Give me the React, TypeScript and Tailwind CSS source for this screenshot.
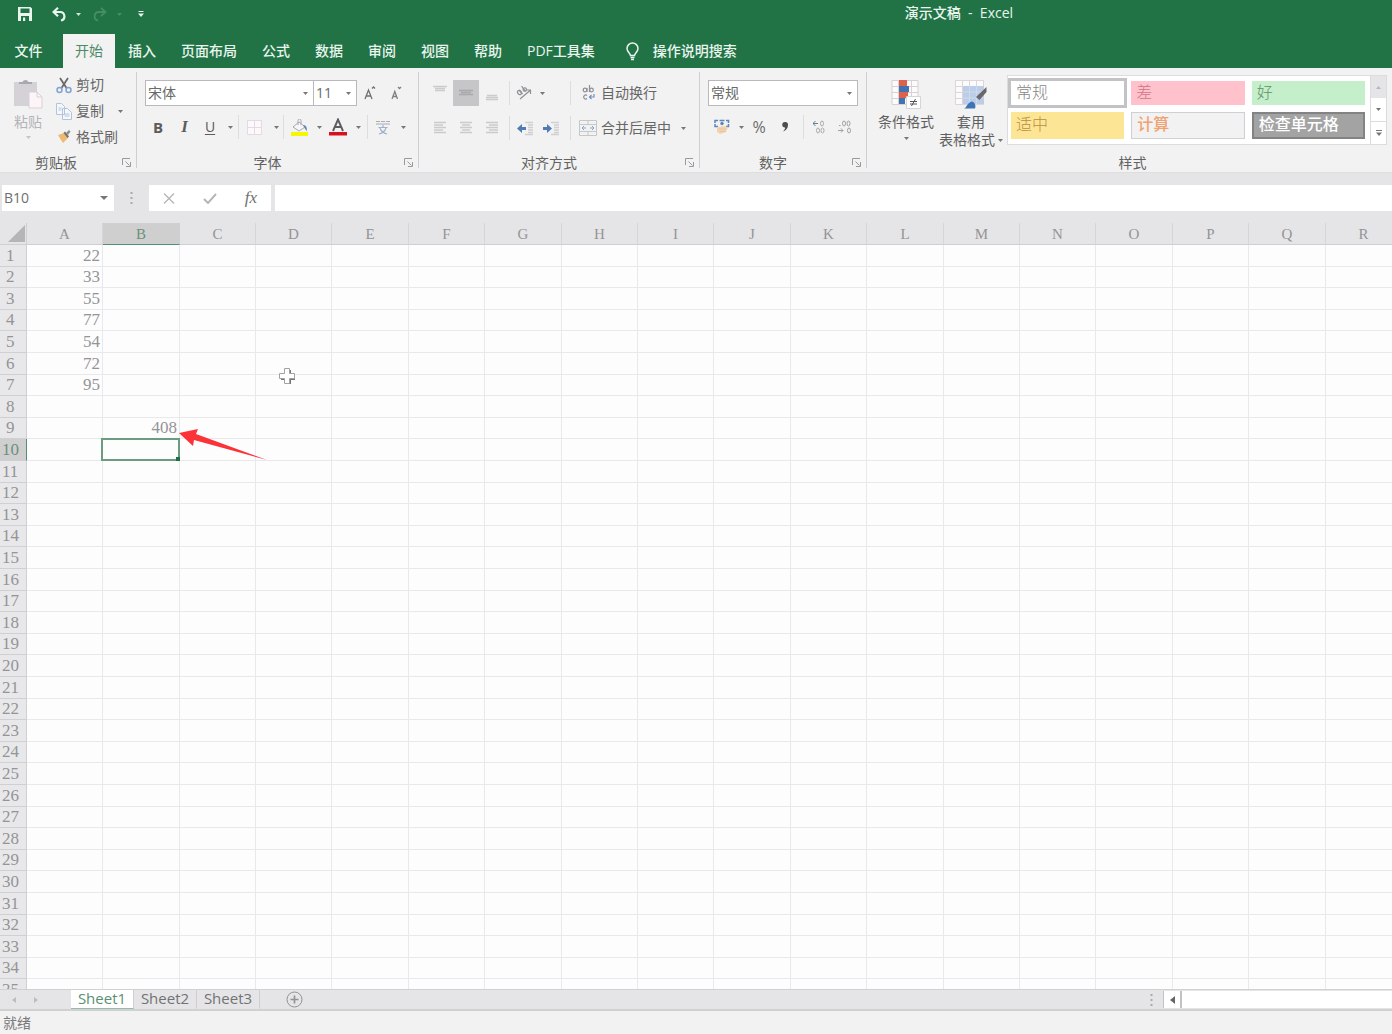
import React, { useState } from 'react';

const UI_FONT = "font-['Open_Sans','Noto_Sans_CJK_SC',sans-serif]";
const CELL_FONT = "font-['Liberation_Serif','Noto_Sans_CJK_SC',serif]";

const tabs = ['文件', '开始', '插入', '页面布局', '公式', '数据', '审阅', '视图', '帮助', 'PDF工具集'];
const sheets = ['Sheet1', 'Sheet2', 'Sheet3'];
const columns = 'ABCDEFGHIJKLMNOPQR'.split('');
const rows = Array.from({ length: 35 }, (_, i) => i + 1);

const cellValues: Record<string, string> = {
  A1: '22',
  A2: '33',
  A3: '55',
  A4: '77',
  A5: '54',
  A6: '72',
  A7: '95',
  B9: '408',
};

// Column and row sizes repeat in groups of five
const columnWidths = ['w-[77px]', 'w-[76px]', 'w-[76px]', 'w-[77px]', 'w-[76px]'];
const rowHeights = ['h-[22px]', 'h-[21px]', 'h-[22px]', 'h-[21px]', 'h-[22px]'];

const cellStyles = [
  { name: '常规', className: 'bg-white font-light text-[#858585] outline-3 outline-[#c3c3c5]' },
  { name: '差', className: 'bg-[#ffc2cd] font-light text-[#cf7685]' },
  { name: '好', className: 'bg-[#c5eecb] font-light text-[#5f9167]' },
  { name: '适中', className: 'bg-[#fde596] font-light text-[#b98f42]' },
  { name: '计算', className: 'bg-[#f2f2f3] font-medium text-[#f0a272] border border-[#cfcfd6]' },
  { name: '检查单元格', className: 'bg-[#a3a3a3] font-medium text-white border-2 border-[#838383]' },
];

interface IconButtonProps {
  label: string;
  className?: string;
  children: React.ReactNode;
}

const IconButton: React.FC<IconButtonProps> = ({ label, className = 'w-[26px]', children }) => (
  <button type="button" aria-label={label} className={`flex h-[26px] shrink-0 items-center justify-center ${className}`}>
    {children}
  </button>
);

const Caret: React.FC<{ className?: string }> = ({ className = 'text-[#777]' }) => (
  <svg width="5" height="3" viewBox="0 0 5 3" className={`shrink-0 ${className}`}>
    <path d="M0 0h5L2.500 3z" fill="currentColor" />
  </svg>
);

const Divider = () => <div className="h-6 w-px shrink-0 bg-[#dddde0]" />;

const Launcher: React.FC<{ label: string }> = ({ label }) => (
  <button type="button" aria-label={label} className="absolute right-1 bottom-0">
    <svg width="10" height="10" viewBox="0 0 10 10" fill="none" stroke="#9a9a9d">
      <path d="M.5 7V.5H8M3.500 3.500l4 4M8.500 4v4.500H4" />
    </svg>
  </button>
);

interface GroupProps {
  title: string;
  className: string;
  launcher?: boolean;
  children: React.ReactNode;
}

const Group: React.FC<GroupProps> = ({ title, className, launcher = true, children }) => (
  <section className={`relative flex h-24 flex-col border-r border-[#cfcfd1] ${className}`}>
    <div className="flex-1">{children}</div>
    <div className="-mb-[3px] text-center text-sm leading-4 text-[#626262]">{title}</div>
    {launcher && <Launcher label={title} />}
  </section>
);

interface DropdownProps {
  label: string;
  options: string[];
  className: string;
}

const Dropdown: React.FC<DropdownProps> = ({ label, options, className }) => (
  <div className={`relative flex h-[26px] shrink-0 items-center border border-[#b9b9bb] bg-white ${className}`}>
    <select aria-label={label} className="h-full w-full appearance-none bg-transparent px-[2px] text-sm leading-5 text-[#6a6a6a] outline-none">
      {options.map((o) => (
        <option key={o}>{o}</option>
      ))}
    </select>
    <Caret className="pointer-events-none absolute right-[5px] text-[#777]" />
  </div>
);

const Lines: React.FC<{ d: string }> = ({ d }) => (
  <svg width="14" height="16" viewBox="0 0 14 16" fill="none" stroke="#cbcbce" strokeWidth="1.600">
    <path d={d} />
  </svg>
);

const TitleBar = () => (
  <header className="relative flex h-[34px] items-start pl-[18px] text-[#e9f5ee]">
    <div className="flex h-7 items-center">
      <button type="button" aria-label="保存">
        <svg width="14" height="14" viewBox="0 0 14 14">
          <path fillRule="evenodd" d="M0 0h12.500L14 1.500V14H0zM2.500 1.500v4.500h9v-4.500zM3 9v5h8V9z" fill="currentColor" />
          <path d="M5 10.500h2.200V14H5z" fill="currentColor" />
        </svg>
      </button>
      <button type="button" aria-label="撤消" className="ml-5">
        <svg width="14" height="15" viewBox="0 0 14 15" fill="none" stroke="currentColor" strokeWidth="2.200">
          <path d="M6 .8L1.500 5 6 9.200M2 5h6a4.300 4.300 0 0 1 1 8.500" />
        </svg>
      </button>
      <Caret className="ml-[10px] text-[#cfe6d8]" />
      <button type="button" aria-label="恢复" className="ml-3">
        <svg width="14" height="15" viewBox="0 0 14 15" fill="none" stroke="#468d65" strokeWidth="1.800">
          <path d="M8 .8L12.500 5 8 9.200M12 5H6a4.300 4.300 0 0 0-1 8.500" />
        </svg>
      </button>
      <Caret className="ml-[10px] text-[#468d65]" />
      <button type="button" aria-label="自定义快速访问工具栏" className="ml-4">
        <svg width="6" height="6" viewBox="0 0 6 6" fill="currentColor">
          <path d="M.5 0h5v1h-5zM0 2.500h6L3 6z" />
        </svg>
      </button>
    </div>
    <div className="absolute top-0 right-0 left-[65%] flex h-[26px] items-center text-sm font-medium whitespace-pre">
      演示文稿  -  Excel
    </div>
  </header>
);

const Menu: React.FC<{ active: string; onChange: (tab: string) => void }> = ({ active, onChange }) => (
  <nav className="flex h-[34px] items-stretch gap-px pl-[2px] text-sm font-medium text-[#e9f5ee]">
    {tabs.map((tab) => (
      <button
        key={tab}
        type="button"
        onClick={() => onChange(tab)}
        className={`shrink-0 whitespace-nowrap ${tab === '文件' ? 'mr-[7px] w-[53px]' : 'px-3'} ${
          tab === active ? 'bg-[#f2f2f2] font-normal text-[#4b8a67]' : ''
        }`}
      >
        {tab}
      </button>
    ))}
    <button type="button" className="ml-[18px] flex items-center gap-[14px] whitespace-nowrap">
      <svg width="13" height="19" viewBox="0 0 13 19" fill="none" stroke="currentColor" strokeWidth="1.500">
        <path d="M4.500 13.500c0-2-3.500-3.500-3.500-7a5.500 5.500 0 0 1 11 0c0 3.500-3.500 5-3.500 7zM4.500 15.500h4M5 17.500h3" />
      </svg>
      操作说明搜索
    </button>
  </nav>
);

const ClipboardGroup = () => (
  <Group title="剪贴板" className="w-[137px] shrink-0 [&>div:nth-child(2)]:pr-6">
    <div className="flex">
      <button type="button" className="flex w-[56px] flex-col items-center pt-[6px] text-sm leading-5 text-[#b4b4b6]">
        <svg width="30" height="31" viewBox="0 0 30 31">
          <path d="M1 4h23v24H1z" fill="#d4d2d7" />
          <path d="M6 6V4h3.500a3.200 3.200 0 0 1 6 0H19v2z" fill="#aaa8ad" />
          <path d="M16 14h8l5 5v11H16z" fill="#fbf5f8" stroke="#dccfd8" />
          <path d="M24 14v5h5" fill="none" stroke="#dccfd8" />
        </svg>
        <span className="mt-[3px]">粘贴</span>
        <Caret className="mt-1 text-[#c5c5c5]" />
      </button>
      <div className="flex flex-col text-sm text-[#666]">
        <button type="button" className="flex h-[26px] items-center gap-1">
          <svg width="16" height="17" viewBox="0 0 16 17" fill="none" strokeWidth="1.500">
            <path d="M4 1l6.500 10M12 1L5.500 11" stroke="#6a6a6c" strokeWidth="1.800" />
            <circle cx="3.500" cy="13" r="2.500" stroke="#7fa3d3" />
            <circle cx="12.500" cy="13" r="2.500" stroke="#7fa3d3" />
          </svg>
          剪切
        </button>
        <button type="button" className="flex h-[26px] items-center gap-1">
          <svg width="16" height="17" viewBox="0 0 16 17" fill="#f4f8fc" stroke="#b4c4d8">
            <path d="M.5.5h5l3 3v8h-8zM6.500 5.500h5l4 4v7h-9z" />
            <path d="M2.500 5h3M2.500 7h3M8.500 11h5M8.500 13h5" />
          </svg>
          复制
          <Caret className="ml-[10px] text-[#777]" />
        </button>
        <button type="button" className="flex h-[26px] items-center gap-1">
          <svg width="16" height="16" viewBox="0 0 16 16">
            <path d="M2 6l6-2 4 5-5 5-2-3z" fill="#eeba72" />
            <path d="M7.500 4L9 2.500l4 5L11.500 9z" fill="#78716c" />
            <path d="M10 4l3-3 1.500 1.500L12 6z" fill="#8d8d8d" />
          </svg>
          格式刷
        </button>
      </div>
    </div>
  </Group>
);

const FontGroup = () => (
  <Group title="字体" className="w-[282px] shrink-0 [&>div:nth-child(2)]:pr-5">
    <div className="flex pt-2 pl-2">
      <Dropdown label="字体" options={['宋体', '黑体', '微软雅黑']} className="w-[169px]" />
      <Dropdown label="字号" options={['11', '12', '14', '16']} className="-ml-px w-11" />
      <IconButton label="增大字号">
        <svg width="12" height="14" viewBox="0 0 12 14" fill="none" stroke="#707072" strokeWidth="1.300">
          <path d="M1 13l3.500-9L8 13M2.300 10h4.500M8 2.500l1.500-1.500L11 2.500" />
        </svg>
      </IconButton>
      <IconButton label="减小字号">
        <svg width="12" height="14" viewBox="0 0 12 14" fill="none" stroke="#808082" strokeWidth="1.300">
          <path d="M2 13l2.800-7.500L7.500 13M3 10.500h3.500M8 1l1.500 1.500L11 1" />
        </svg>
      </IconButton>
    </div>
    <div className="flex items-center pt-2 pl-[7px] text-[#5c5c5c]">
      <IconButton label="加粗" className="w-7">
        <b className="text-[15px] leading-4">B</b>
      </IconButton>
      <IconButton label="倾斜" className="w-[25px]">
        <span className="font-['Liberation_Serif',serif] text-[17px] leading-4 font-bold italic">I</span>
      </IconButton>
      <IconButton label="下划线">
        <span className="text-sm leading-4 underline underline-offset-2">U</span>
      </IconButton>
      <IconButton label="下划线选项" className="w-[15px]">
        <Caret />
      </IconButton>
      <Divider />
      <IconButton label="边框" className="w-[30px]">
        <svg width="15" height="15" viewBox="0 0 15 15" fill="#fcf8fb" stroke="#e2dbe2">
          <path d="M.5.5h14v14H.5zM7.500 0v15M0 7.500h15" />
        </svg>
      </IconButton>
      <IconButton label="边框选项" className="w-[14px]">
        <Caret />
      </IconButton>
      <Divider />
      <IconButton label="填充颜色" className="w-[30px]">
        <svg width="19" height="17" viewBox="0 0 19 17">
          <path d="M3 8l6-5 6 5-6 4z" fill="#f6f6f8" stroke="#a5a9b0" />
          <path d="M8 6V1.500a1.500 1.500 0 0 1 3 0V6" fill="none" stroke="#a5a9b0" />
          <path d="M13 6c3 0 4 2 4 6-2-1-2-3-4-6z" fill="#6485b5" />
          <path d="M1 13h17v4H1z" fill="#f8f500" />
        </svg>
      </IconButton>
      <IconButton label="填充颜色选项" className="w-[10px]">
        <Caret />
      </IconButton>
      <IconButton label="字体颜色" className="w-7">
        <svg width="18" height="18" viewBox="0 0 18 18">
          <path d="M4 13L9 1.500 14 13M6 9h6" fill="none" stroke="#5b5b60" strokeWidth="1.900" />
          <path d="M0 14h18v3.500H0z" fill="#d8121c" />
        </svg>
      </IconButton>
      <IconButton label="字体颜色选项" className="w-3">
        <Caret />
      </IconButton>
      <div className="ml-[3px]">
        <Divider />
      </div>
      <IconButton label="拼音指南" className="w-[30px]">
        <svg width="14" height="15" viewBox="0 0 14 15" fill="none" stroke="#9fb0cf" strokeWidth="1.200">
          <path d="M0 1.500h4M5 1.500h4M10 1.500h4M0 4h14" stroke="#aaaab0" />
          <path d="M7 5v2M2.500 7.500h9M4 8c1 3 3 5 7 6M10 8c-1 3-3 5-7 6" />
        </svg>
      </IconButton>
      <IconButton label="拼音选项" className="w-[10px]">
        <Caret />
      </IconButton>
    </div>
  </Group>
);

const AlignGroup = () => (
  <Group title="对齐方式" className="w-[281px] shrink-0 [&>div:nth-child(2)]:pr-5">
    <div className="flex items-center pt-2 pl-2 text-[#666]">
      <IconButton label="顶端对齐">
        <Lines d="M0 1.500h14M2 3.500h10M2 5.500h10" />
      </IconButton>
      <IconButton label="垂直居中" className="w-[26px] bg-[#c6c5c8] [&_path]:stroke-[#a9a8ac]">
        <Lines d="M0 5.500h14M2 7.500h10M0 9.500h14" />
      </IconButton>
      <IconButton label="底端对齐">
        <Lines d="M2 10.500h10M1 12.500h12M1 14.500h12" />
      </IconButton>
      <div className="ml-1">
        <Divider />
      </div>
      <IconButton label="方向" className="w-[28px]">
        <svg width="16" height="14" viewBox="0 0 16 14" fill="none" stroke="#909094" strokeWidth="1.200">
          <ellipse cx="3.500" cy="6.500" rx="1.800" ry="2.200" transform="rotate(-40 3.500 6.500)" />
          <path d="M3 4l3.500 4M5.500 0l4 5.500" />
          <circle cx="8.800" cy="3.500" r="1.700" />
          <path d="M4 13l10-8.500M10.500 4h4v4" />
        </svg>
      </IconButton>
      <IconButton label="方向选项" className="w-2">
        <Caret />
      </IconButton>
      <div className="ml-6">
        <Divider />
      </div>
      <button type="button" className="ml-[10px] flex h-[26px] items-center gap-1 text-sm whitespace-nowrap">
        <svg width="16" height="16" viewBox="0 0 16 16" fill="none" stroke="#8f9095" strokeWidth="1.200">
          <circle cx="4" cy="5" r="1.800" />
          <path d="M6 3v4M8.500 0v7M6 10.500a2 2 0 1 0 0 3" />
          <circle cx="10.500" cy="5" r="1.800" />
          <path d="M13 9v3H9M10.500 10L8.500 12l2 2" stroke="#6e91c4" />
        </svg>
        自动换行
      </button>
    </div>
    <div className="flex items-center pt-[9px] pl-2 text-[#666]">
      <IconButton label="左对齐">
        <Lines d="M1 2.500h12M1 5h9M1 7.500h12M1 10h9M1 12.500h12" />
      </IconButton>
      <IconButton label="居中">
        <Lines d="M1 2.500h12M3 5h8M1 7.500h12M3 10h8M1 12.500h12" />
      </IconButton>
      <IconButton label="右对齐">
        <Lines d="M1 2.500h12M4 5h9M1 7.500h12M4 10h9M1 12.500h12" />
      </IconButton>
      <div className="ml-1">
        <Divider />
      </div>
      <IconButton label="减少缩进量" className="ml-[2px] w-[26px]">
        <svg width="17" height="15" viewBox="0 0 17 15">
          <path d="M8 1.500h8M11 4h5M11 6.500h5M11 9h5M11 11.500h5M8 13.500h8" stroke="#d0d0d4" strokeWidth="1.500" />
          <path d="M0 7.500L5 3v3h4v3H5v3z" fill="#507bb5" />
        </svg>
      </IconButton>
      <IconButton label="增加缩进量">
        <svg width="17" height="15" viewBox="0 0 17 15">
          <path d="M8 1.500h8M11 4h5M11 6.500h5M11 9h5M11 11.500h5M8 13.500h8" stroke="#d0d0d4" strokeWidth="1.500" />
          <path d="M9 7.500L4 3v3H0v3h4v3z" fill="#507bb5" />
        </svg>
      </IconButton>
      <div className="ml-[6px]">
        <Divider />
      </div>
      <button type="button" className="ml-2 flex h-[26px] items-center gap-1 text-sm whitespace-nowrap">
        <svg width="18" height="16" viewBox="0 0 18 16" fill="none" stroke="#c6c6cb">
          <path d="M.5.5h17v15H.5zM0 4.500h18M0 11.500h18M9 0v4.500M9 11.500V16" />
          <path d="M3 8h4M11 8h4M5 6L3 8l2 2M13 6l2 2-2 2" stroke="#8ba5cc" />
        </svg>
        合并后居中
        <Caret className="ml-[6px] text-[#777]" />
      </button>
    </div>
  </Group>
);

const NumberGroup = () => (
  <Group title="数字" className="w-[167px] shrink-0 [&>div:nth-child(2)]:pr-5">
    <div className="pt-2 pl-2">
      <Dropdown label="数字格式" options={['常规', '数值', '货币', '百分比']} className="w-[150px]" />
    </div>
    <div className="flex items-center pt-2 pl-2 text-[#6a6a6a]">
      <IconButton label="会计数字格式" className="w-7">
        <svg width="16" height="16" viewBox="0 0 16 16" fill="none">
          <path d="M1 4V1.500h3M12 1.500h2.500V4M1 5v2.500h3M12 7.500h2.500V5M5.500 1.500h5" stroke="#5c85bd" strokeWidth="1.500" />
          <circle cx="8" cy="4.500" r="1.700" fill="#5c85bd" />
          <path d="M3 9c2-2 8-2 11-1l-2 5-6 2-3-2z" fill="#f2d3b0" />
          <path d="M5 10h7M6 12.500h6" stroke="#e6c49f" />
        </svg>
      </IconButton>
      <IconButton label="会计格式选项" className="w-[10px]">
        <Caret />
      </IconButton>
      <IconButton label="百分比样式">
        <span className="text-base leading-4">%</span>
      </IconButton>
      <IconButton label="千位分隔样式">
        <svg width="7" height="10" viewBox="0 0 7 10">
          <path d="M3 0a2.700 2.700 0 0 1 3 3c0 3-2 5.500-5 6.500 1.500-1.500 2.500-3 2-4A2.700 2.700 0 0 1 3 0z" fill="#4c4c4e" />
        </svg>
      </IconButton>
      <div className="ml-[5px]">
        <Divider />
      </div>
      <IconButton label="增加小数位数" className="ml-[2px] w-[26px]">
        <svg width="12" height="14" viewBox="0 0 12 14" fill="none" stroke="#aaaaad">
          <path d="M5 3.500H0M2.500 1L0 3.500 2.500 6" stroke="#5f8196" />
          <ellipse cx="9" cy="3.500" rx="1.500" ry="2.500" />
          <ellipse cx="5" cy="10.500" rx="1.500" ry="2.500" />
          <ellipse cx="9.500" cy="10.500" rx="1.500" ry="2.500" />
        </svg>
      </IconButton>
      <IconButton label="减少小数位数">
        <svg width="14" height="14" viewBox="0 0 14 14" fill="none" stroke="#a0a0a3">
          <ellipse cx="6" cy="3.500" rx="1.500" ry="2.500" />
          <ellipse cx="10.500" cy="3.500" rx="1.500" ry="2.500" />
          <path d="M1 5.500h1.500M0 10.500h5M3 8.500l2 2-2 2" />
          <ellipse cx="11" cy="10.500" rx="1.500" ry="2.500" />
        </svg>
      </IconButton>
    </div>
  </Group>
);

const StylesGroup = () => (
  <Group title="样式" className="min-w-[525px] flex-1 border-r-0 [&>div:nth-child(2)]:pl-[6px]" launcher={false}>
    <div className="flex pl-[6px] text-sm leading-[18px] whitespace-nowrap text-[#5f5f61]">
      <button type="button" className="flex w-[66px] flex-col items-center pt-[7px]">
        <svg width="30" height="30" viewBox="0 0 30 30">
          <path d="M1 1.500h26v24H1zM1 7.500h26M1 13.500h26M1 19.500h26M7.500 1v25M20.500 1v25" fill="#fbfbfc" stroke="#d9d0d4" />
          <path d="M8 1h8v6H8zM8 13h9v6H8z" fill="#d9634b" />
          <path d="M8 7h10v6H8zM8 19h6v6H8z" fill="#4173b3" />
          <path d="M15.500 17.500h14v12h-14z" fill="#fff" stroke="#d5d5d8" />
          <path d="M19 22.500h7M19 25h7M24.500 20l-4 7" stroke="#555" />
        </svg>
        <span className="mt-1">条件格式</span>
        <Caret className="mt-[6px] text-[#777]" />
      </button>
      <button type="button" className="flex w-16 flex-col items-center pt-[7px]">
        <svg width="32" height="30" viewBox="0 0 32 30">
          <path d="M.5 1.500h28v24H.5zM0 7.500h29M0 13.500h29M0 19.500h29M7.500 1v25M14.500 1v25M21.500 1v25" fill="#fbfbfc" stroke="#ddd5d9" />
          <path d="M8 7h21v18H8z" fill="#bccde8" />
          <path d="M8 13h21M8 19h21M14.500 7v18M21.500 7v18" stroke="#cddaee" />
          <path d="M31.500 8v5l-7 8-3.500-3z" fill="#68686b" />
          <path d="M9 29.500c3-1 3-6 8-7 3.500 1 4 5 3 7z" fill="#3f73b7" />
        </svg>
        <span className="mt-1">套用</span>
        <span className="flex items-center gap-[3px]">
          表格格式
          <Caret />
        </span>
      </button>
      <div className="mt-[3px] ml-1 flex h-[70px] w-[380px] border border-[#dcdcde] bg-white">
        <div className="grid flex-1 grid-cols-3 gap-x-[7px] gap-y-[7px] px-[3px] py-[5px]">
          {cellStyles.map((s) => (
            <button key={s.name} type="button" className={`px-[5px] pb-[2px] text-left text-base leading-5 ${s.className}`}>
              {s.name}
            </button>
          ))}
        </div>
        <div className="ml-[2px] flex w-4 flex-col border-l border-[#dcdcde]">
          <button type="button" aria-label="上一行" className="flex flex-1 items-center justify-center bg-[#e5e5e7]">
            <Caret className="rotate-180 text-[#b9b9bb]" />
          </button>
          <button type="button" aria-label="下一行" className="flex flex-1 items-center justify-center">
            <Caret />
          </button>
          <button type="button" aria-label="其他样式" className="flex flex-1 items-center justify-center border-t border-[#dcdcde]">
            <svg width="6" height="6" viewBox="0 0 6 6" fill="#777">
              <path d="M0 0h6v1H0zM0 2.500h6L3 6z" />
            </svg>
          </button>
        </div>
      </div>
    </div>
  </Group>
);

const FormulaBar = () => (
  <div className="flex h-[26px] items-stretch pl-[2px]">
    <div className="relative flex w-28 shrink-0 items-center bg-white">
      <input aria-label="名称框" defaultValue="B10" className="w-full px-[2px] text-sm text-[#6f6f71] outline-none" />
      <svg width="8" height="4" viewBox="0 0 8 4" className="absolute right-[6px]">
        <path d="M0 0h8L4 4z" fill="#777" />
      </svg>
    </div>
    <div className="flex w-[35px] shrink-0 items-center justify-center">
      <svg width="3" height="12" viewBox="0 0 3 12" fill="#aaa">
        <path d="M.5 0h2v2h-2zM.5 5h2v2h-2zM.5 10h2v2h-2z" />
      </svg>
    </div>
    <div className="flex w-[122px] shrink-0 items-center bg-white">
      <IconButton label="取消" className="w-10">
        <svg width="12" height="11" viewBox="0 0 12 11" fill="none" stroke="#b5b5b5" strokeWidth="1.300">
          <path d="M1 .5l10 10M11 .5l-10 10" />
        </svg>
      </IconButton>
      <IconButton label="输入" className="w-[42px]">
        <svg width="14" height="11" viewBox="0 0 14 11" fill="none" stroke="#b5b5b5" strokeWidth="1.900">
          <path d="M1 6l4 4 8-9" />
        </svg>
      </IconButton>
      <IconButton label="插入函数" className="w-10">
        <span className="font-['Liberation_Serif',serif] text-[17px] leading-4 text-[#707070] italic">fx</span>
      </IconButton>
    </div>
    <input aria-label="编辑栏" className="ml-1 min-w-0 flex-1 bg-white px-2 text-sm outline-none" />
  </div>
);

const Grid = () => (
  <main className={`relative min-h-0 flex-1 overflow-hidden bg-[#fdfdfd] ${CELL_FONT}`}>
    <table className="w-[1401px] table-fixed border-separate border-spacing-0 text-[17px] leading-4 text-[#949496]">
      <colgroup>
        <col className="w-[27px]" />
        {columns.map((c, i) => (
          <col key={c} className={i === 0 ? 'w-[76px]' : columnWidths[(i - 1) % 5]} />
        ))}
      </colgroup>
      <thead>
        <tr>
          <th className="h-[22px] border-r border-b border-[#cfcfd1] bg-[#e5e5e7] p-0">
            <svg width="17" height="17" viewBox="0 0 17 17" className="ml-auto mr-px">
              <path d="M17 0v17H0z" fill="#b5b5b7" />
            </svg>
          </th>
          {columns.map((c) => (
            <th
              key={c}
              className={`h-[22px] border-r border-b p-0 text-[15px] font-normal ${
                c === 'B' ? 'border-r-[#cfcfd1] border-b-[#4f9170] bg-[#cfcfd0] text-[#6b8f7c]' : 'border-r-[#d6d6d8] border-b-[#cfcfd1] bg-[#e5e5e7]'
              }`}
            >
              {c}
            </th>
          ))}
        </tr>
      </thead>
      <tbody>
        {rows.map((r, i) => (
          <tr key={r}>
            <th
              className={`border-r border-b border-[#d0d0d2] p-0 text-left font-normal ${rowHeights[i % 5]} ${r < 10 ? 'pl-[6px]' : 'pl-[2px]'} ${
                r === 10 ? 'border-r-[#4f9170] bg-[#cfcfd0] text-[#6b8f7c]' : 'bg-[#e8e8ea]'
              }`}
            >
              {r}
            </th>
            {columns.map((c) => (
              <td key={c} className="relative border-r border-b border-[#e9e9eb] p-0 pr-[2px] text-right">
                {cellValues[c + r]}
                {c + r === 'B10' && (
                  <span className="absolute -inset-px -left-[2px] border-2 border-[#6b9c80]">
                    <span className="absolute -right-[2px] -bottom-[2px] h-1 w-1 bg-[#1f7145]" />
                  </span>
                )}
              </td>
            ))}
          </tr>
        ))}
      </tbody>
    </table>
    {/* Arrow pointing at the result */}
    <svg width="88" height="34" viewBox="0 0 88 34" className="absolute top-[205px] left-[179px]">
      <path d="M0 5L19 1l-2 5L88 32 15 12l-1 6z" fill="#fb3339" />
    </svg>
    {/* Cell cursor */}
    <svg width="17" height="17" viewBox="0 0 17 17" className="absolute top-[145px] left-[279px]">
      <path d="M6 2h6v4h4v6h-4v4H6v-4H2V6h4z" fill="#77777a" />
      <path d="M5.500.500h5v5h5v5h-5v5h-5v-5h-5v-5h5z" fill="#fff" stroke="#a2a2a5" />
    </svg>
  </main>
);

const SheetBar: React.FC<{ active: string; onChange: (sheet: string) => void }> = ({ active, onChange }) => (
  <div className="flex h-[22px] shrink-0 items-stretch border-t border-b-2 border-[#d1d1d3] text-[15px] leading-4 text-[#727274]">
    <div className="flex w-[71px] shrink-0 items-center gap-[18px] pl-3 text-[#bdbdbf]">
      <button type="button" aria-label="上一个工作表">
        <svg width="4" height="6" viewBox="0 0 4 6"><path d="M4 0v6L0 3z" fill="currentColor" /></svg>
      </button>
      <button type="button" aria-label="下一个工作表">
        <svg width="4" height="6" viewBox="0 0 4 6"><path d="M0 0v6l4-3z" fill="currentColor" /></svg>
      </button>
    </div>
    {sheets.map((s) => (
      <button
        key={s}
        type="button"
        onClick={() => onChange(s)}
        className={`w-[63px] shrink-0 border-r border-b border-r-[#cfcfd1] pb-[3px] ${
          s === active ? 'border-b-[#9bb9a8] bg-white text-[#5a9073]' : 'border-b-transparent'
        }`}
      >
        {s}
      </button>
    ))}
    <button type="button" aria-label="新工作表" className="ml-[26px] flex items-center">
      <svg width="17" height="17" viewBox="0 0 17 17" fill="none" stroke="#929294">
        <circle cx="8.500" cy="8.500" r="7.500" />
        <path d="M8.500 4.500v8M4.500 8.500h8" strokeWidth="1.700" />
      </svg>
    </button>
    <div className="ml-auto flex w-[242px] shrink-0 items-stretch">
      <svg width="3" height="12" viewBox="0 0 3 12" fill="#aaa" className="mr-[10px] self-center">
        <path d="M.5 0h2v2h-2zM.5 5h2v2h-2zM.5 10h2v2h-2z" />
      </svg>
      <button type="button" aria-label="向左滚动" className="my-px flex w-[19px] items-center justify-center border-r-2 border-l border-[#c2c2c4] bg-white">
        <svg width="5" height="8" viewBox="0 0 5 8"><path d="M5 0v8L0 4z" fill="#666" /></svg>
      </button>
      <div className="my-px flex-1 bg-white" />
    </div>
  </div>
);

export default function App() {
  const [activeTab, setActiveTab] = useState<string>('开始');
  const [activeSheet, setActiveSheet] = useState<string>('Sheet1');

  return (
    <div className={`flex h-screen flex-col overflow-hidden bg-[#e5e5e7] ${UI_FONT}`}>
      <div className="shrink-0 bg-[#217346]">
        <TitleBar />
        <Menu active={activeTab} onChange={setActiveTab} />
      </div>
      <div className="flex h-[104px] shrink-0 items-center bg-[#f2f2f2]">
        <ClipboardGroup />
        <FontGroup />
        <AlignGroup />
        <NumberGroup />
        <StylesGroup />
      </div>
      <div className="shrink-0 border-t border-[#dededf] pt-3 pb-3">
        <FormulaBar />
      </div>
      <Grid />
      <SheetBar active={activeSheet} onChange={setActiveSheet} />
      <footer className="flex h-[23px] shrink-0 items-center bg-[#f2f2f2] pl-[3px] text-sm text-[#78787a]">就绪</footer>
    </div>
  );
}
